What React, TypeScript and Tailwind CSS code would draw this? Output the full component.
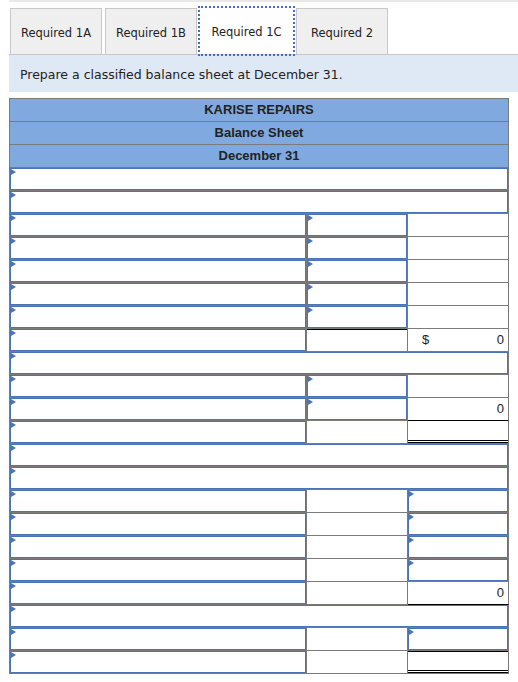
type Amt = "in" | "blank" | "blankTop" | "dollar0" | "zeroUnder" | "total" | "totalTop";
type Row = { full: true } | { full?: false; a: Amt; b: Amt };

const rows: Row[] = [
  { full: true },
  { full: true },
  { a: "in", b: "blank" },
  { a: "in", b: "blank" },
  { a: "in", b: "blank" },
  { a: "in", b: "blank" },
  { a: "in", b: "blank" },
  { a: "blankTop", b: "dollar0" },
  { full: true },
  { a: "in", b: "blank" },
  { a: "in", b: "zeroUnder" },
  { a: "blank", b: "total" },
  { full: true },
  { full: true },
  { a: "blank", b: "in" },
  { a: "blank", b: "in" },
  { a: "blank", b: "in" },
  { a: "blank", b: "in" },
  { a: "blank", b: "zeroUnder" },
  { full: true },
  { a: "blank", b: "in" },
  { a: "blank", b: "totalTop" },
];

const tabs = ["Required 1A", "Required 1B", "Required 1C", "Required 2"];

function Marker() {
  return (
    <span className="absolute left-0 top-0 h-0 w-0 border-y-[3.5px] border-l-[5px] border-y-transparent border-l-[#4a74b6]" />
  );
}

function InputBox() {
  return (
    <div className="relative h-full border border-[#4a74b6] bg-white">
      <Marker />
    </div>
  );
}

function AmountCell({ kind }: { kind: Amt }) {
  if (kind === "in") {
    return (
      <div className="h-[23px] border-r border-b border-[#7b7b7b]">
        <InputBox />
      </div>
    );
  }
  if (kind === "blankTop") {
    return (
      <div className="h-[23px] border-r border-b border-[#7b7b7b]">
        <div className="h-full border-t border-black" />
      </div>
    );
  }
  if (kind === "dollar0") {
    return (
      <div className="flex h-[23px] items-center justify-between border-r border-b border-[#7b7b7b] pl-[14px] pr-[4px] text-[13px] text-[#222]">
        <span>$</span>
        <span>0</span>
      </div>
    );
  }
  if (kind === "zeroUnder") {
    return (
      <div className="flex h-[23px] items-center justify-end border-r border-b border-r-[#7b7b7b] border-b-black pr-[4px] text-[13px] text-[#222]">
        0
      </div>
    );
  }
  if (kind === "total") {
    return (
      <div className="h-[23px] border-r border-b border-[#7b7b7b]">
        <div className="h-full border-b-[3px] border-double border-black" />
      </div>
    );
  }
  if (kind === "totalTop") {
    return (
      <div className="h-[23px] border-r border-b border-[#7b7b7b]">
        <div className="h-full border-t border-b-[3px] border-t-black border-b-black [border-bottom-style:double]" />
      </div>
    );
  }
  return <div className="h-[23px] border-r border-b border-[#7b7b7b]" />;
}

export default function App() {
  return (
    <div className="min-h-[682px] w-[518px] bg-white font-['Liberation_Sans',Arial,sans-serif]">
      <div className="ml-[9px] h-[2px] bg-[#e8e8e8]" />

      <div className="ml-[9px] mt-[6px] flex items-end gap-[3px] border-b border-[#c8c8c8] pl-[1px] font-['DejaVu_Sans',Verdana,sans-serif] text-[11.5px] text-[#222]">
        {tabs.map((t) =>
          t === "Required 1C" ? (
            <div
              key={t}
              className="flex h-[46px] w-[93px] items-center justify-center bg-white pt-[4px] outline-2 outline-dotted outline-[#3f6fc6]"
            >
              {t}
            </div>
          ) : (
            <div
              key={t}
              className="flex h-[46px] w-[92px] items-center justify-center border-x border-t border-[#c8c8c8] bg-[#efefef] pt-[4px]"
            >
              {t}
            </div>
          )
        )}
      </div>

      <div className="ml-[9px] flex h-[37px] items-center bg-[#dfe9f6] pl-[11px] pt-[3px] font-['DejaVu_Sans',Verdana,sans-serif] text-[12.5px] text-[#222]">
        Prepare a classified balance sheet at December 31.
      </div>

      <div className="ml-[9px] mt-[6px] w-[500px] border-l border-t border-[#7b7b7b]">
        {["KARISE REPAIRS", "Balance Sheet", "December 31"].map((h) => (
          <div
            key={h}
            className="flex h-[23px] items-center justify-center border-r border-b border-[#7b7b7b] bg-[#80aadf] text-[13px] font-bold text-[#222]"
          >
            {h}
          </div>
        ))}
        {rows.map((r, i) =>
          r.full ? (
            <div key={i} className="h-[23px] border-r border-b border-[#7b7b7b]">
              <InputBox />
            </div>
          ) : (
            <div key={i} className="grid grid-cols-[297px_101px_101px]">
              <div className="h-[23px] border-r border-b border-[#7b7b7b]">
                <InputBox />
              </div>
              <AmountCell kind={r.a} />
              <AmountCell kind={r.b} />
            </div>
          )
        )}
      </div>
    </div>
  );
}
